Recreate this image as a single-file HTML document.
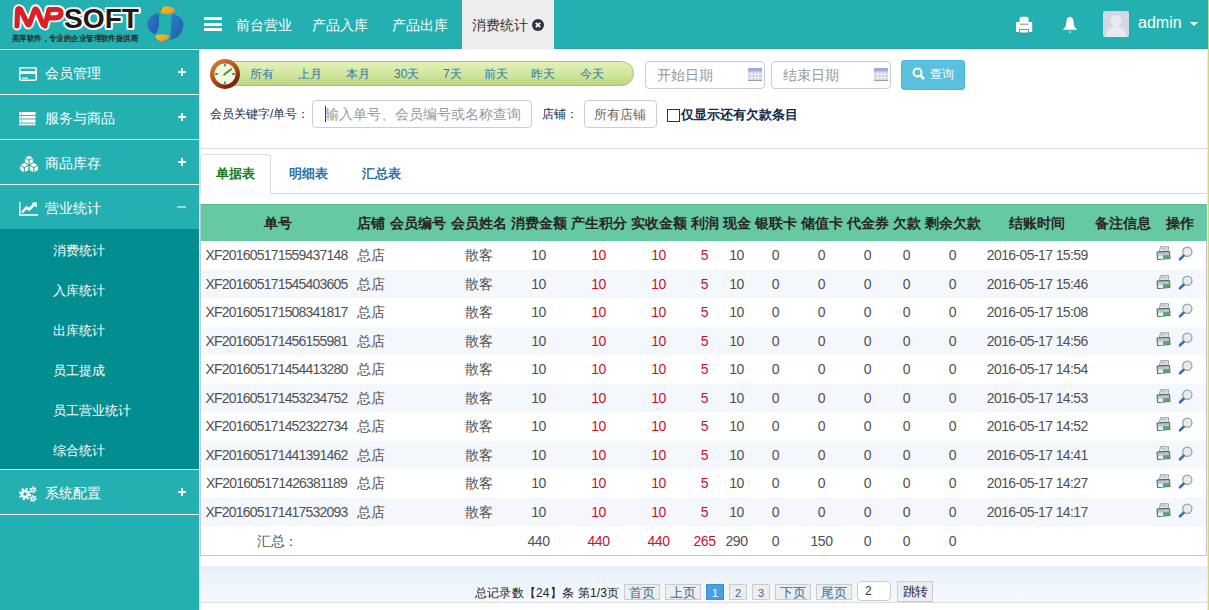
<!DOCTYPE html>
<html><head><meta charset="utf-8">
<style>
*{margin:0;padding:0;box-sizing:border-box}
html,body{width:1209px;height:610px;overflow:hidden;background:#fff;font-family:"Liberation Sans",sans-serif;font-size:13px;color:#333}
.abs{position:absolute}
#hdr{position:absolute;left:0;top:0;width:1209px;height:49px;background:#24b0b0}
#hline{position:absolute;left:0;top:49px;width:1209px;height:1px;background:#e6fcfc}
#hdark{position:absolute;left:0;top:48px;width:1209px;height:1px;background:#2fa3a3}
#rborder{position:absolute;left:1208px;top:0;width:1px;height:610px;background:#dccf7e}
#rcream{position:absolute;left:1207px;top:49px;width:1px;height:561px;background:#f4ead0}
/* sidebar */
#side{position:absolute;left:0;top:50px;width:199px;height:560px;background:#24b0b0}
.mi{position:absolute;left:0;width:199px;height:44px;color:#fff;font-size:14px}
.mi .t{position:absolute;left:45px;top:15px;line-height:16px;white-space:nowrap;font-size:14.4px}
.mi .pl{position:absolute;left:178px;top:18px;width:8px;height:8px}
.mi .pl:before{content:"";position:absolute;left:0;top:3px;width:8px;height:2px;background:#fff}
.mi .pl:after{content:"";position:absolute;left:3px;top:0;width:2px;height:8px;background:#fff}
.sl{position:absolute;left:0;width:199px;height:1px;background:#f2fbfb}
#sub{position:absolute;left:0;top:179px;width:199px;height:240px;background:#028d90}
.si{position:absolute;left:53px;width:140px;height:16px;line-height:16px;color:#fff;font-size:13px;white-space:nowrap}
/* header items */
.nav{position:absolute;top:17px;line-height:16px;font-size:14px;color:#fff;white-space:nowrap}
#acttab{position:absolute;left:462px;top:0;width:92px;height:49px;background:#ededed}
/* filter */
.rng{position:absolute;top:67px;line-height:14px;font-size:12px;color:#2b78b0;white-space:nowrap}
.inp{position:absolute;border:1px solid #ccc;border-radius:4px;background:#fff}
.ph{position:absolute;color:#999;font-size:14px;line-height:16px;white-space:nowrap}
.lbl{position:absolute;font-size:12px;color:#132c4c;line-height:14px;white-space:nowrap}
/* tabs */
.tab{position:absolute;top:166px;font-size:13px;font-weight:bold;line-height:15px;white-space:nowrap}
/* table */
#tbl{position:absolute;left:200px;top:204px;width:1008px;height:352px}
#thead{position:absolute;left:0;top:0;width:1007px;height:37px;background:#66c9a2;border-top:1px solid #5cb995}
#thead .c{position:absolute;top:10px;font-size:14px;font-weight:bold;color:#262626;text-align:center;line-height:16px;white-space:nowrap}
.row{position:absolute;left:0;width:1006px;height:28.5px}
.row.odd{background:#f4f8fc}
.row .c{position:absolute;top:7px;text-align:center;line-height:15px;white-space:nowrap;color:#505050;font-size:14px;letter-spacing:-0.5px}
.red{color:#c8102e}
.ico-pr,.ico-mg{position:absolute;top:5px;width:15px;height:15px}
</style></head><body>
<div id="hdr"></div>
<div id="hline"></div>
<div id="hdark"></div>

<!-- logo -->
<svg class="abs" style="left:0;top:0" width="145" height="48" viewBox="0 0 145 48">
 <g fill="none" stroke-linecap="round" stroke-linejoin="round">
  <path d="M17 26 L17.5 10.5 Q18 7.5 20.5 9.5 L27.5 24 Q28.5 26 29.5 24 L34.5 10 Q35.5 7.5 37 10 L43 24.5" stroke="#fff" stroke-width="9"/><path d="M45 26 L49 9.5 L57 9.5 Q61.5 9.5 61 13.5 Q60.5 17.8 55.5 17.8 L48 17.8" stroke="#fff" stroke-width="9"/>
 </g>
 <text x="64" y="28" textLength="75" lengthAdjust="spacingAndGlyphs" font-family="Liberation Sans" font-weight="bold" font-size="28" stroke="#fff" stroke-width="4" stroke-linejoin="round" paint-order="stroke" fill="#231815">SOFT</text>
 <g fill="none" stroke-linecap="round" stroke-linejoin="round">
  <path d="M17 26 L17.5 10.5 Q18 7.5 20.5 9.5 L27.5 24 Q28.5 26 29.5 24 L34.5 10 Q35.5 7.5 37 10 L43 24.5" stroke="#dc1f25" stroke-width="5.2"/><path d="M45 26 L49 9.5 L57 9.5 Q61.5 9.5 61 13.5 Q60.5 17.8 55.5 17.8 L48 17.8" stroke="#dc1f25" stroke-width="5.2"/>
 </g>
 <text x="12" y="41" textLength="126" lengthAdjust="spacingAndGlyphs" font-family="Liberation Sans" font-weight="bold" font-size="7.5" fill="#1e2a2a">美萍软件，专业的企业管理软件提供商</text>
</svg>
<svg class="abs" style="left:140px;top:0" width="50" height="48" viewBox="0 0 50 48"><defs><linearGradient id="lb" x1="0" y1="0" x2="1" y2="1"><stop offset="0" stop-color="#2f7fcf"/><stop offset="1" stop-color="#1f5aa8"/></linearGradient><linearGradient id="ly" x1="0" y1="0" x2="1" y2="1"><stop offset="0" stop-color="#f7c62a"/><stop offset="1" stop-color="#f08a1c"/></linearGradient></defs>
 <path d="M19.2 12.9 C12 13.5 7 19 7.2 24.2 C7.4 29 10.5 33 15.3 34 C17.5 31 19 28 19 24 C19 20 19.2 16 19.2 12.9Z" fill="url(#lb)"/>
 <path d="M32.2 13.6 C38.5 15 43.5 19.5 43.5 24.9 C43.5 32 38 38.5 30 40 C30.4 38 30.4 36.5 30.4 35.4 C31 30 31.2 27 31.2 24 C31.2 20 31.8 16.5 32.2 13.6Z" fill="url(#lb)"/>
 <path d="M19.2 12.2 C20 9 22.5 6.5 25 6.5 C29 6.3 33.5 7.5 35 10.8 C33.5 13.5 30 14.5 27.3 14.3 C24 14 21.5 13 19.2 12.2Z" fill="url(#ly)"/>
 <path d="M15.3 36 C17 34.5 20 34.3 23 34.5 C26 34.6 28.5 35 30.1 36.1 C28.5 39.5 24 41.5 20.2 41.1 C17.5 40.8 15.8 38.5 15.3 36Z" fill="url(#ly)"/>
 <path d="M19.2 12.2 C19.5 9.5 21.5 7.5 23.5 6.8 C22 9 21 11 20.5 12.6Z" fill="#3f9b3e"/>
 <path d="M30.1 36.1 C31 38 29.5 40 26 41.2 C28.5 39.5 29.5 38 30.1 36.1Z" fill="#2f8f3e"/>
</svg>

<!-- hamburger -->
<div class="abs" style="left:204px;top:17px;width:18px;height:3px;background:#fff"></div>
<div class="abs" style="left:204px;top:23px;width:18px;height:3px;background:#fff"></div>
<div class="abs" style="left:204px;top:28px;width:18px;height:3px;background:#fff"></div>
<div class="nav" style="left:236px">前台营业</div>
<div class="nav" style="left:312px">产品入库</div>
<div class="nav" style="left:392px">产品出库</div>
<div id="acttab"></div>
<div class="nav" style="left:472px;color:#333">消费统计</div>
<svg class="abs" style="left:532px;top:19px" width="12" height="12" viewBox="0 0 12 12"><circle cx="6" cy="6" r="6" fill="#2d3142"/><path d="M3.8 3.8L8.2 8.2M8.2 3.8L3.8 8.2" stroke="#fff" stroke-width="1.8"/></svg>

<!-- right header icons -->
<svg class="abs" style="left:1016px;top:16px" width="17" height="18" viewBox="0 0 17 18"><rect x="3.6" y="0.8" width="9" height="8" rx="2" fill="#fff"/><rect x="0" y="6" width="16.2" height="10" rx="0.5" fill="#fff"/><path d="M3.6 8.2 H12.6" stroke="#3a9aa0" stroke-width="0.9"/><rect x="3.6" y="13.4" width="9" height="3.6" fill="#fff" stroke="#3a9aa0" stroke-width="0.9"/></svg>
<svg class="abs" style="left:1062px;top:16px" width="16" height="18" viewBox="0 0 16 18"><path d="M8 0.8 C5.8 0.8 4.6 3 4.3 6 L3.8 9.8 C3.4 11.4 2 12.4 0.6 13.8 L15.4 13.8 C14 12.4 12.6 11.4 12.2 9.8 L11.7 6 C11.4 3 10.2 0.8 8 0.8Z" fill="#fff"/><path d="M6.8 15.6 H9.2 L8 17.2Z" fill="#fff"/></svg>
<div class="abs" style="left:1103px;top:11px;width:26px;height:26px;background:#d3d7e3;border-radius:2px;overflow:hidden">
 <div class="abs" style="left:8px;top:4px;width:10px;height:12px;border-radius:5px;background:#e8eaf2"></div>
 <div class="abs" style="left:3px;top:16px;width:20px;height:12px;border-radius:8px 8px 0 0;background:#e8eaf2"></div>
</div>
<div class="abs" style="left:1138px;top:14px;font-size:16px;line-height:18px;color:#fff">admin</div>
<div class="abs" style="left:1190px;top:22px;width:0;height:0;border-left:4px solid transparent;border-right:4px solid transparent;border-top:4px solid #fff"></div>

<!-- sidebar -->
<div id="side">
 <div class="mi" style="top:0"><svg class="abs" style="left:19px;top:67px;top:17px" width="18" height="14" viewBox="0 0 18 14"><rect x="0.75" y="0.75" width="16.5" height="12.5" rx="1.5" fill="none" stroke="#fff" stroke-width="1.5"/><rect x="1" y="4" width="16" height="3" fill="#fff"/><rect x="3" y="10.5" width="6" height="1.2" fill="#fff"/></svg><span class="t">会员管理</span><span class="pl"></span></div>
 <div class="sl" style="top:44px"></div>
 <div class="mi" style="top:45px"><svg class="abs" style="left:19px;top:17px" width="17" height="14" viewBox="0 0 17 14"><rect x="0" y="0" width="16.5" height="13.3" fill="#fff"/><rect x="0" y="3" width="17" height="0.9" fill="#24b0b0"/><rect x="0" y="6.5" width="17" height="0.9" fill="#24b0b0"/><rect x="0" y="10.6" width="17" height="0.9" fill="#24b0b0"/><rect x="2.3" y="0" width="0.8" height="14" fill="#7fcfd0"/></svg><span class="t">服务与商品</span><span class="pl"></span></div>
 <div class="sl" style="top:89px"></div>
 <div class="mi" style="top:90px"><svg class="abs" style="left:19px;top:15px" width="20" height="18" viewBox="0 0 20 18"><polygon points="10.00,0.20 14.33,2.70 14.33,7.70 10.00,10.20 5.67,7.70 5.67,2.70" fill="#fff" stroke="#24b0b0" stroke-width="0.9"/><path d="M5.67 2.70 L10.00 5.20 L14.33 2.70 M10.00 5.20 L10.00 10.20" fill="none" stroke="#2a8f8a" stroke-width="1"/><polygon points="5.30,7.40 9.80,10.00 9.80,15.20 5.30,17.80 0.80,15.20 0.80,10.00" fill="#fff" stroke="#24b0b0" stroke-width="0.9"/><path d="M0.80 10.00 L5.30 12.60 L9.80 10.00 M5.30 12.60 L5.30 17.80" fill="none" stroke="#2a8f8a" stroke-width="1"/><polygon points="14.80,7.40 19.30,10.00 19.30,15.20 14.80,17.80 10.30,15.20 10.30,10.00" fill="#fff" stroke="#24b0b0" stroke-width="0.9"/><path d="M10.30 10.00 L14.80 12.60 L19.30 10.00 M14.80 12.60 L14.80 17.80" fill="none" stroke="#2a8f8a" stroke-width="1"/></svg><span class="t">商品库存</span><span class="pl"></span></div>
 <div class="sl" style="top:134px"></div>
 <div class="mi" style="top:135px"><svg class="abs" style="left:18px;top:16px" width="20" height="16" viewBox="0 0 20 16"><path d="M1.75 1 V13.9 H20" fill="none" stroke="#fff" stroke-width="1.5"/><path d="M4 11.5 L8.5 6.5 L11 8.5 L16 3.8" fill="none" stroke="#fff" stroke-width="2.6"/><path d="M13.5 1.8 L19 1.2 L18.5 6.8Z" fill="#fff"/></svg><span class="t">营业统计</span><span class="abs" style="left:177px;top:21px;width:9px;height:2px;background:#9edbd2"></span></div>
 <div id="sub">
  <div class="si" style="top:14px">消费统计</div>
  <div class="si" style="top:54px">入库统计</div>
  <div class="si" style="top:94px">出库统计</div>
  <div class="si" style="top:134px">员工提成</div>
  <div class="si" style="top:174px">员工营业统计</div>
  <div class="si" style="top:214px">综合统计</div>
 </div>
 <div class="sl" style="top:419px"></div>
 <div class="mi" style="top:420px"><svg class="abs" style="left:18px;top:16px" width="20" height="16" viewBox="0 0 20 16"><circle cx="7" cy="8" r="4.3" fill="#fff"/><circle cx="7" cy="8" r="5.2" fill="none" stroke="#fff" stroke-width="2" stroke-dasharray="2.04 2.04"/><circle cx="7" cy="8" r="1.8" fill="#24b0b0"/><circle cx="15" cy="3.8" r="2.3" fill="#fff"/><circle cx="15" cy="3.8" r="2.9" fill="none" stroke="#fff" stroke-width="1.4" stroke-dasharray="1.52 1.52"/><circle cx="15" cy="3.8" r="0.9" fill="#24b0b0"/><circle cx="15" cy="12.6" r="2.3" fill="#fff"/><circle cx="15" cy="12.6" r="2.9" fill="none" stroke="#fff" stroke-width="1.4" stroke-dasharray="1.52 1.52"/><circle cx="15" cy="12.6" r="0.9" fill="#24b0b0"/></svg><span class="t">系统配置</span><span class="pl"></span></div>
 <div class="sl" style="top:464px"></div>
</div>

<!-- filter bar -->
<div class="abs" style="left:226px;top:61px;width:408px;height:25px;border:1px solid #a5c46c;border-radius:0 12.5px 12.5px 0;background:linear-gradient(#e3f1b9,#cfe49a 60%,#bcd67f)"></div>
<svg class="abs" style="left:210px;top:59px" width="30" height="30" viewBox="0 0 30 30"><defs><linearGradient id="cr" x1="0" y1="0" x2="0.6" y2="1"><stop offset="0" stop-color="#d9802e"/><stop offset="0.55" stop-color="#b5501c"/><stop offset="1" stop-color="#7d2410"/></linearGradient></defs><circle cx="15" cy="15" r="12.8" fill="#eef8e2" stroke="url(#cr)" stroke-width="4.4"/><path d="M15 5v2.6M15 22.4v2.6M5.2 15h2.6M22.2 15h2.6" stroke="#37583a" stroke-width="1.3"/><path d="M14 15.8 L21.5 10 L15.5 14.2Z" fill="#4a9a30" stroke="#4a9a30" stroke-width="1.6" stroke-linejoin="round"/></svg>
<div class="rng" style="left:250px">所有</div>
<div class="rng" style="left:298px">上月</div>
<div class="rng" style="left:346px">本月</div>
<div class="rng" style="left:394px">30天</div>
<div class="rng" style="left:443px">7天</div>
<div class="rng" style="left:484px">前天</div>
<div class="rng" style="left:531px">昨天</div>
<div class="rng" style="left:580px">今天</div>

<div class="inp" style="left:645px;top:61px;width:120px;height:28px"></div>
<div class="ph" style="left:657px;top:67px">开始日期</div>
<svg class="abs" style="left:748px;top:68px" width="14" height="13" viewBox="0 0 14 13"><rect x="0" y="0" width="14" height="13" rx="1" fill="#cdd0e6"/><rect x="0" y="0" width="14" height="3.5" fill="#9eaed6"/><path d="M0 6.3h14M0 9.6h14M3.8 3.5v9.5M7.3 3.5v9.5M10.6 3.5v9.5" stroke="#f4f6fb" stroke-width="0.9"/><rect x="0" y="12" width="14" height="1" fill="#98a0c0"/></svg>
<div class="inp" style="left:771px;top:61px;width:120px;height:28px"></div>
<div class="ph" style="left:783px;top:67px">结束日期</div>
<svg class="abs" style="left:874px;top:68px" width="14" height="13" viewBox="0 0 14 13"><rect x="0" y="0" width="14" height="13" rx="1" fill="#cdd0e6"/><rect x="0" y="0" width="14" height="3.5" fill="#9eaed6"/><path d="M0 6.3h14M0 9.6h14M3.8 3.5v9.5M7.3 3.5v9.5M10.6 3.5v9.5" stroke="#f4f6fb" stroke-width="0.9"/><rect x="0" y="12" width="14" height="1" fill="#98a0c0"/></svg>
<div class="abs" style="left:901px;top:60px;width:64px;height:30px;background:#5bc0de;border-radius:3px;border:1px solid #46b8da"></div>
<svg class="abs" style="left:912px;top:67px" width="13" height="13" viewBox="0 0 13 13"><circle cx="5.5" cy="5.5" r="4" fill="none" stroke="#fff" stroke-width="2"/><path d="M8.5 8.5L12 12" stroke="#fff" stroke-width="2.5"/></svg>
<div class="abs" style="left:930px;top:67px;font-size:12px;line-height:14px;color:#fff">查询</div>

<div class="lbl" style="left:210px;top:107px">会员关键字/单号：</div>
<div class="inp" style="left:312px;top:100px;width:220px;height:28px"></div>
<div class="abs" style="left:325px;top:106px;width:1px;height:16px;background:#333"></div>
<div class="ph" style="left:325px;top:106px;width:196px;overflow:hidden">输入单号、会员编号或名称查询</div>
<div class="lbl" style="left:542px;top:107px">店铺：</div>
<div class="inp" style="left:584px;top:100px;width:73px;height:28px"></div>
<div class="abs" style="left:594px;top:107px;font-size:13px;line-height:15px;color:#666">所有店铺</div>
<div class="abs" style="left:667px;top:109px;width:13px;height:13px;border:1px solid #333;background:#fff"></div>
<div class="lbl" style="left:681px;top:107px;font-size:13px;line-height:15px;font-weight:bold;color:#11294a">仅显示还有欠款条目</div>

<!-- tabs -->
<div class="abs" style="left:200px;top:148px;width:1008px;height:1px;background:#ddd"></div>
<div class="abs" style="left:200px;top:193px;width:1008px;height:1px;background:#ddd"></div>
<div class="abs" style="left:200px;top:154px;width:71px;height:40px;background:#fff;border:1px solid #ddd;border-bottom:none;border-radius:4px 4px 0 0"></div>
<div class="tab" style="left:216px;color:#1a7a1a">单据表</div>
<div class="tab" style="left:289px;color:#2a6fa8">明细表</div>
<div class="tab" style="left:362px;color:#2a6fa8">汇总表</div>

<!-- table -->
<div id="tbl">
 <div id="thead"><div class="c " style="left:1.5px;width:152px">单号</div><div class="c " style="left:153.5px;width:34px">店铺</div><div class="c " style="left:187.5px;width:61px">会员编号</div><div class="c " style="left:248.5px;width:60px">会员姓名</div><div class="c " style="left:308.5px;width:60px">消费金额</div><div class="c " style="left:368.5px;width:60px">产生积分</div><div class="c " style="left:428.5px;width:60px">实收金额</div><div class="c " style="left:488.5px;width:32px">利润</div><div class="c " style="left:520.5px;width:32px">现金</div><div class="c " style="left:552.5px;width:46px">银联卡</div><div class="c " style="left:598.5px;width:46px">储值卡</div><div class="c " style="left:644.5px;width:46px">代金券</div><div class="c " style="left:690.5px;width:32px">欠款</div><div class="c " style="left:722.5px;width:60px">剩余欠款</div><div class="c " style="left:782.5px;width:109.5px">结账时间</div><div class="c " style="left:892.0px;width:61.0px">备注信息</div><div class="c " style="left:953.0px;width:53.5px">操作</div></div>
 <div class="row even" style="top:37px;height:29px"><div class="c " style="left:1.5px;width:152px"><span style="letter-spacing:-0.8px;position:relative;left:-1px">XF201605171559437148</span></div><div class="c " style="left:153.5px;width:34px"><span style="font-size:13.5px">总店</span></div><div class="c " style="left:187.5px;width:61px"></div><div class="c " style="left:248.5px;width:60px"><span style="font-size:13.5px">散客</span></div><div class="c " style="left:308.5px;width:60px">10</div><div class="c " style="left:368.5px;width:60px"><span class="red">10</span></div><div class="c " style="left:428.5px;width:60px"><span class="red">10</span></div><div class="c " style="left:488.5px;width:32px"><span class="red">5</span></div><div class="c " style="left:520.5px;width:32px">10</div><div class="c " style="left:552.5px;width:46px">0</div><div class="c " style="left:598.5px;width:46px">0</div><div class="c " style="left:644.5px;width:46px">0</div><div class="c " style="left:690.5px;width:32px">0</div><div class="c " style="left:722.5px;width:60px">0</div><div class="c " style="left:782.5px;width:109.5px"><span style="letter-spacing:-0.6px">2016-05-17 15:59</span></div><div class="c " style="left:892.0px;width:61.0px"></div><div class="c " style="left:953.0px;width:53.5px"></div><svg class="ico-pr" style="left:956px" width="15" height="15" viewBox="0 0 15 15"><path d="M4.5 0.8 L12.5 0.8 L12 5.5 L3.5 5.5Z" fill="#f4f6f8" stroke="#7d8a95" stroke-width="0.9"/><path d="M1 6 L13.5 5.5 L14 12.5 L1.5 13.5Z" fill="#b9c4cc" stroke="#505d68" stroke-width="1"/><path d="M2 9.5 L13.5 9 L13.8 12.3 L2 13Z" fill="#5aa867"/><path d="M2 9.5 L7 9.3 L7 12.9 L2 13Z" fill="#e6edf0"/><path d="M5.5 2.5h5M5.5 4h5" stroke="#9aa6b0" stroke-width="0.7"/></svg><svg class="ico-mg" style="left:978px" width="15" height="15" viewBox="0 0 15 15"><circle cx="9.3" cy="5.8" r="4.6" fill="#e9ecef" stroke="#9aa1a7" stroke-width="1.3"/><path d="M2 13.3 L5.6 9.8" stroke="#3d6fb6" stroke-width="2.6" stroke-linecap="round"/></svg></div><div class="row odd" style="top:66px;height:28px"><div class="c " style="left:1.5px;width:152px"><span style="letter-spacing:-0.8px;position:relative;left:-1px">XF201605171545403605</span></div><div class="c " style="left:153.5px;width:34px"><span style="font-size:13.5px">总店</span></div><div class="c " style="left:187.5px;width:61px"></div><div class="c " style="left:248.5px;width:60px"><span style="font-size:13.5px">散客</span></div><div class="c " style="left:308.5px;width:60px">10</div><div class="c " style="left:368.5px;width:60px"><span class="red">10</span></div><div class="c " style="left:428.5px;width:60px"><span class="red">10</span></div><div class="c " style="left:488.5px;width:32px"><span class="red">5</span></div><div class="c " style="left:520.5px;width:32px">10</div><div class="c " style="left:552.5px;width:46px">0</div><div class="c " style="left:598.5px;width:46px">0</div><div class="c " style="left:644.5px;width:46px">0</div><div class="c " style="left:690.5px;width:32px">0</div><div class="c " style="left:722.5px;width:60px">0</div><div class="c " style="left:782.5px;width:109.5px"><span style="letter-spacing:-0.6px">2016-05-17 15:46</span></div><div class="c " style="left:892.0px;width:61.0px"></div><div class="c " style="left:953.0px;width:53.5px"></div><svg class="ico-pr" style="left:956px" width="15" height="15" viewBox="0 0 15 15"><path d="M4.5 0.8 L12.5 0.8 L12 5.5 L3.5 5.5Z" fill="#f4f6f8" stroke="#7d8a95" stroke-width="0.9"/><path d="M1 6 L13.5 5.5 L14 12.5 L1.5 13.5Z" fill="#b9c4cc" stroke="#505d68" stroke-width="1"/><path d="M2 9.5 L13.5 9 L13.8 12.3 L2 13Z" fill="#5aa867"/><path d="M2 9.5 L7 9.3 L7 12.9 L2 13Z" fill="#e6edf0"/><path d="M5.5 2.5h5M5.5 4h5" stroke="#9aa6b0" stroke-width="0.7"/></svg><svg class="ico-mg" style="left:978px" width="15" height="15" viewBox="0 0 15 15"><circle cx="9.3" cy="5.8" r="4.6" fill="#e9ecef" stroke="#9aa1a7" stroke-width="1.3"/><path d="M2 13.3 L5.6 9.8" stroke="#3d6fb6" stroke-width="2.6" stroke-linecap="round"/></svg></div><div class="row even" style="top:94px;height:29px"><div class="c " style="left:1.5px;width:152px"><span style="letter-spacing:-0.8px;position:relative;left:-1px">XF201605171508341817</span></div><div class="c " style="left:153.5px;width:34px"><span style="font-size:13.5px">总店</span></div><div class="c " style="left:187.5px;width:61px"></div><div class="c " style="left:248.5px;width:60px"><span style="font-size:13.5px">散客</span></div><div class="c " style="left:308.5px;width:60px">10</div><div class="c " style="left:368.5px;width:60px"><span class="red">10</span></div><div class="c " style="left:428.5px;width:60px"><span class="red">10</span></div><div class="c " style="left:488.5px;width:32px"><span class="red">5</span></div><div class="c " style="left:520.5px;width:32px">10</div><div class="c " style="left:552.5px;width:46px">0</div><div class="c " style="left:598.5px;width:46px">0</div><div class="c " style="left:644.5px;width:46px">0</div><div class="c " style="left:690.5px;width:32px">0</div><div class="c " style="left:722.5px;width:60px">0</div><div class="c " style="left:782.5px;width:109.5px"><span style="letter-spacing:-0.6px">2016-05-17 15:08</span></div><div class="c " style="left:892.0px;width:61.0px"></div><div class="c " style="left:953.0px;width:53.5px"></div><svg class="ico-pr" style="left:956px" width="15" height="15" viewBox="0 0 15 15"><path d="M4.5 0.8 L12.5 0.8 L12 5.5 L3.5 5.5Z" fill="#f4f6f8" stroke="#7d8a95" stroke-width="0.9"/><path d="M1 6 L13.5 5.5 L14 12.5 L1.5 13.5Z" fill="#b9c4cc" stroke="#505d68" stroke-width="1"/><path d="M2 9.5 L13.5 9 L13.8 12.3 L2 13Z" fill="#5aa867"/><path d="M2 9.5 L7 9.3 L7 12.9 L2 13Z" fill="#e6edf0"/><path d="M5.5 2.5h5M5.5 4h5" stroke="#9aa6b0" stroke-width="0.7"/></svg><svg class="ico-mg" style="left:978px" width="15" height="15" viewBox="0 0 15 15"><circle cx="9.3" cy="5.8" r="4.6" fill="#e9ecef" stroke="#9aa1a7" stroke-width="1.3"/><path d="M2 13.3 L5.6 9.8" stroke="#3d6fb6" stroke-width="2.6" stroke-linecap="round"/></svg></div><div class="row odd" style="top:123px;height:28px"><div class="c " style="left:1.5px;width:152px"><span style="letter-spacing:-0.8px;position:relative;left:-1px">XF201605171456155981</span></div><div class="c " style="left:153.5px;width:34px"><span style="font-size:13.5px">总店</span></div><div class="c " style="left:187.5px;width:61px"></div><div class="c " style="left:248.5px;width:60px"><span style="font-size:13.5px">散客</span></div><div class="c " style="left:308.5px;width:60px">10</div><div class="c " style="left:368.5px;width:60px"><span class="red">10</span></div><div class="c " style="left:428.5px;width:60px"><span class="red">10</span></div><div class="c " style="left:488.5px;width:32px"><span class="red">5</span></div><div class="c " style="left:520.5px;width:32px">10</div><div class="c " style="left:552.5px;width:46px">0</div><div class="c " style="left:598.5px;width:46px">0</div><div class="c " style="left:644.5px;width:46px">0</div><div class="c " style="left:690.5px;width:32px">0</div><div class="c " style="left:722.5px;width:60px">0</div><div class="c " style="left:782.5px;width:109.5px"><span style="letter-spacing:-0.6px">2016-05-17 14:56</span></div><div class="c " style="left:892.0px;width:61.0px"></div><div class="c " style="left:953.0px;width:53.5px"></div><svg class="ico-pr" style="left:956px" width="15" height="15" viewBox="0 0 15 15"><path d="M4.5 0.8 L12.5 0.8 L12 5.5 L3.5 5.5Z" fill="#f4f6f8" stroke="#7d8a95" stroke-width="0.9"/><path d="M1 6 L13.5 5.5 L14 12.5 L1.5 13.5Z" fill="#b9c4cc" stroke="#505d68" stroke-width="1"/><path d="M2 9.5 L13.5 9 L13.8 12.3 L2 13Z" fill="#5aa867"/><path d="M2 9.5 L7 9.3 L7 12.9 L2 13Z" fill="#e6edf0"/><path d="M5.5 2.5h5M5.5 4h5" stroke="#9aa6b0" stroke-width="0.7"/></svg><svg class="ico-mg" style="left:978px" width="15" height="15" viewBox="0 0 15 15"><circle cx="9.3" cy="5.8" r="4.6" fill="#e9ecef" stroke="#9aa1a7" stroke-width="1.3"/><path d="M2 13.3 L5.6 9.8" stroke="#3d6fb6" stroke-width="2.6" stroke-linecap="round"/></svg></div><div class="row even" style="top:151px;height:29px"><div class="c " style="left:1.5px;width:152px"><span style="letter-spacing:-0.8px;position:relative;left:-1px">XF201605171454413280</span></div><div class="c " style="left:153.5px;width:34px"><span style="font-size:13.5px">总店</span></div><div class="c " style="left:187.5px;width:61px"></div><div class="c " style="left:248.5px;width:60px"><span style="font-size:13.5px">散客</span></div><div class="c " style="left:308.5px;width:60px">10</div><div class="c " style="left:368.5px;width:60px"><span class="red">10</span></div><div class="c " style="left:428.5px;width:60px"><span class="red">10</span></div><div class="c " style="left:488.5px;width:32px"><span class="red">5</span></div><div class="c " style="left:520.5px;width:32px">10</div><div class="c " style="left:552.5px;width:46px">0</div><div class="c " style="left:598.5px;width:46px">0</div><div class="c " style="left:644.5px;width:46px">0</div><div class="c " style="left:690.5px;width:32px">0</div><div class="c " style="left:722.5px;width:60px">0</div><div class="c " style="left:782.5px;width:109.5px"><span style="letter-spacing:-0.6px">2016-05-17 14:54</span></div><div class="c " style="left:892.0px;width:61.0px"></div><div class="c " style="left:953.0px;width:53.5px"></div><svg class="ico-pr" style="left:956px" width="15" height="15" viewBox="0 0 15 15"><path d="M4.5 0.8 L12.5 0.8 L12 5.5 L3.5 5.5Z" fill="#f4f6f8" stroke="#7d8a95" stroke-width="0.9"/><path d="M1 6 L13.5 5.5 L14 12.5 L1.5 13.5Z" fill="#b9c4cc" stroke="#505d68" stroke-width="1"/><path d="M2 9.5 L13.5 9 L13.8 12.3 L2 13Z" fill="#5aa867"/><path d="M2 9.5 L7 9.3 L7 12.9 L2 13Z" fill="#e6edf0"/><path d="M5.5 2.5h5M5.5 4h5" stroke="#9aa6b0" stroke-width="0.7"/></svg><svg class="ico-mg" style="left:978px" width="15" height="15" viewBox="0 0 15 15"><circle cx="9.3" cy="5.8" r="4.6" fill="#e9ecef" stroke="#9aa1a7" stroke-width="1.3"/><path d="M2 13.3 L5.6 9.8" stroke="#3d6fb6" stroke-width="2.6" stroke-linecap="round"/></svg></div><div class="row odd" style="top:180px;height:28px"><div class="c " style="left:1.5px;width:152px"><span style="letter-spacing:-0.8px;position:relative;left:-1px">XF201605171453234752</span></div><div class="c " style="left:153.5px;width:34px"><span style="font-size:13.5px">总店</span></div><div class="c " style="left:187.5px;width:61px"></div><div class="c " style="left:248.5px;width:60px"><span style="font-size:13.5px">散客</span></div><div class="c " style="left:308.5px;width:60px">10</div><div class="c " style="left:368.5px;width:60px"><span class="red">10</span></div><div class="c " style="left:428.5px;width:60px"><span class="red">10</span></div><div class="c " style="left:488.5px;width:32px"><span class="red">5</span></div><div class="c " style="left:520.5px;width:32px">10</div><div class="c " style="left:552.5px;width:46px">0</div><div class="c " style="left:598.5px;width:46px">0</div><div class="c " style="left:644.5px;width:46px">0</div><div class="c " style="left:690.5px;width:32px">0</div><div class="c " style="left:722.5px;width:60px">0</div><div class="c " style="left:782.5px;width:109.5px"><span style="letter-spacing:-0.6px">2016-05-17 14:53</span></div><div class="c " style="left:892.0px;width:61.0px"></div><div class="c " style="left:953.0px;width:53.5px"></div><svg class="ico-pr" style="left:956px" width="15" height="15" viewBox="0 0 15 15"><path d="M4.5 0.8 L12.5 0.8 L12 5.5 L3.5 5.5Z" fill="#f4f6f8" stroke="#7d8a95" stroke-width="0.9"/><path d="M1 6 L13.5 5.5 L14 12.5 L1.5 13.5Z" fill="#b9c4cc" stroke="#505d68" stroke-width="1"/><path d="M2 9.5 L13.5 9 L13.8 12.3 L2 13Z" fill="#5aa867"/><path d="M2 9.5 L7 9.3 L7 12.9 L2 13Z" fill="#e6edf0"/><path d="M5.5 2.5h5M5.5 4h5" stroke="#9aa6b0" stroke-width="0.7"/></svg><svg class="ico-mg" style="left:978px" width="15" height="15" viewBox="0 0 15 15"><circle cx="9.3" cy="5.8" r="4.6" fill="#e9ecef" stroke="#9aa1a7" stroke-width="1.3"/><path d="M2 13.3 L5.6 9.8" stroke="#3d6fb6" stroke-width="2.6" stroke-linecap="round"/></svg></div><div class="row even" style="top:208px;height:29px"><div class="c " style="left:1.5px;width:152px"><span style="letter-spacing:-0.8px;position:relative;left:-1px">XF201605171452322734</span></div><div class="c " style="left:153.5px;width:34px"><span style="font-size:13.5px">总店</span></div><div class="c " style="left:187.5px;width:61px"></div><div class="c " style="left:248.5px;width:60px"><span style="font-size:13.5px">散客</span></div><div class="c " style="left:308.5px;width:60px">10</div><div class="c " style="left:368.5px;width:60px"><span class="red">10</span></div><div class="c " style="left:428.5px;width:60px"><span class="red">10</span></div><div class="c " style="left:488.5px;width:32px"><span class="red">5</span></div><div class="c " style="left:520.5px;width:32px">10</div><div class="c " style="left:552.5px;width:46px">0</div><div class="c " style="left:598.5px;width:46px">0</div><div class="c " style="left:644.5px;width:46px">0</div><div class="c " style="left:690.5px;width:32px">0</div><div class="c " style="left:722.5px;width:60px">0</div><div class="c " style="left:782.5px;width:109.5px"><span style="letter-spacing:-0.6px">2016-05-17 14:52</span></div><div class="c " style="left:892.0px;width:61.0px"></div><div class="c " style="left:953.0px;width:53.5px"></div><svg class="ico-pr" style="left:956px" width="15" height="15" viewBox="0 0 15 15"><path d="M4.5 0.8 L12.5 0.8 L12 5.5 L3.5 5.5Z" fill="#f4f6f8" stroke="#7d8a95" stroke-width="0.9"/><path d="M1 6 L13.5 5.5 L14 12.5 L1.5 13.5Z" fill="#b9c4cc" stroke="#505d68" stroke-width="1"/><path d="M2 9.5 L13.5 9 L13.8 12.3 L2 13Z" fill="#5aa867"/><path d="M2 9.5 L7 9.3 L7 12.9 L2 13Z" fill="#e6edf0"/><path d="M5.5 2.5h5M5.5 4h5" stroke="#9aa6b0" stroke-width="0.7"/></svg><svg class="ico-mg" style="left:978px" width="15" height="15" viewBox="0 0 15 15"><circle cx="9.3" cy="5.8" r="4.6" fill="#e9ecef" stroke="#9aa1a7" stroke-width="1.3"/><path d="M2 13.3 L5.6 9.8" stroke="#3d6fb6" stroke-width="2.6" stroke-linecap="round"/></svg></div><div class="row odd" style="top:237px;height:28px"><div class="c " style="left:1.5px;width:152px"><span style="letter-spacing:-0.8px;position:relative;left:-1px">XF201605171441391462</span></div><div class="c " style="left:153.5px;width:34px"><span style="font-size:13.5px">总店</span></div><div class="c " style="left:187.5px;width:61px"></div><div class="c " style="left:248.5px;width:60px"><span style="font-size:13.5px">散客</span></div><div class="c " style="left:308.5px;width:60px">10</div><div class="c " style="left:368.5px;width:60px"><span class="red">10</span></div><div class="c " style="left:428.5px;width:60px"><span class="red">10</span></div><div class="c " style="left:488.5px;width:32px"><span class="red">5</span></div><div class="c " style="left:520.5px;width:32px">10</div><div class="c " style="left:552.5px;width:46px">0</div><div class="c " style="left:598.5px;width:46px">0</div><div class="c " style="left:644.5px;width:46px">0</div><div class="c " style="left:690.5px;width:32px">0</div><div class="c " style="left:722.5px;width:60px">0</div><div class="c " style="left:782.5px;width:109.5px"><span style="letter-spacing:-0.6px">2016-05-17 14:41</span></div><div class="c " style="left:892.0px;width:61.0px"></div><div class="c " style="left:953.0px;width:53.5px"></div><svg class="ico-pr" style="left:956px" width="15" height="15" viewBox="0 0 15 15"><path d="M4.5 0.8 L12.5 0.8 L12 5.5 L3.5 5.5Z" fill="#f4f6f8" stroke="#7d8a95" stroke-width="0.9"/><path d="M1 6 L13.5 5.5 L14 12.5 L1.5 13.5Z" fill="#b9c4cc" stroke="#505d68" stroke-width="1"/><path d="M2 9.5 L13.5 9 L13.8 12.3 L2 13Z" fill="#5aa867"/><path d="M2 9.5 L7 9.3 L7 12.9 L2 13Z" fill="#e6edf0"/><path d="M5.5 2.5h5M5.5 4h5" stroke="#9aa6b0" stroke-width="0.7"/></svg><svg class="ico-mg" style="left:978px" width="15" height="15" viewBox="0 0 15 15"><circle cx="9.3" cy="5.8" r="4.6" fill="#e9ecef" stroke="#9aa1a7" stroke-width="1.3"/><path d="M2 13.3 L5.6 9.8" stroke="#3d6fb6" stroke-width="2.6" stroke-linecap="round"/></svg></div><div class="row even" style="top:265px;height:29px"><div class="c " style="left:1.5px;width:152px"><span style="letter-spacing:-0.8px;position:relative;left:-1px">XF201605171426381189</span></div><div class="c " style="left:153.5px;width:34px"><span style="font-size:13.5px">总店</span></div><div class="c " style="left:187.5px;width:61px"></div><div class="c " style="left:248.5px;width:60px"><span style="font-size:13.5px">散客</span></div><div class="c " style="left:308.5px;width:60px">10</div><div class="c " style="left:368.5px;width:60px"><span class="red">10</span></div><div class="c " style="left:428.5px;width:60px"><span class="red">10</span></div><div class="c " style="left:488.5px;width:32px"><span class="red">5</span></div><div class="c " style="left:520.5px;width:32px">10</div><div class="c " style="left:552.5px;width:46px">0</div><div class="c " style="left:598.5px;width:46px">0</div><div class="c " style="left:644.5px;width:46px">0</div><div class="c " style="left:690.5px;width:32px">0</div><div class="c " style="left:722.5px;width:60px">0</div><div class="c " style="left:782.5px;width:109.5px"><span style="letter-spacing:-0.6px">2016-05-17 14:27</span></div><div class="c " style="left:892.0px;width:61.0px"></div><div class="c " style="left:953.0px;width:53.5px"></div><svg class="ico-pr" style="left:956px" width="15" height="15" viewBox="0 0 15 15"><path d="M4.5 0.8 L12.5 0.8 L12 5.5 L3.5 5.5Z" fill="#f4f6f8" stroke="#7d8a95" stroke-width="0.9"/><path d="M1 6 L13.5 5.5 L14 12.5 L1.5 13.5Z" fill="#b9c4cc" stroke="#505d68" stroke-width="1"/><path d="M2 9.5 L13.5 9 L13.8 12.3 L2 13Z" fill="#5aa867"/><path d="M2 9.5 L7 9.3 L7 12.9 L2 13Z" fill="#e6edf0"/><path d="M5.5 2.5h5M5.5 4h5" stroke="#9aa6b0" stroke-width="0.7"/></svg><svg class="ico-mg" style="left:978px" width="15" height="15" viewBox="0 0 15 15"><circle cx="9.3" cy="5.8" r="4.6" fill="#e9ecef" stroke="#9aa1a7" stroke-width="1.3"/><path d="M2 13.3 L5.6 9.8" stroke="#3d6fb6" stroke-width="2.6" stroke-linecap="round"/></svg></div><div class="row odd" style="top:294px;height:28px"><div class="c " style="left:1.5px;width:152px"><span style="letter-spacing:-0.8px;position:relative;left:-1px">XF201605171417532093</span></div><div class="c " style="left:153.5px;width:34px"><span style="font-size:13.5px">总店</span></div><div class="c " style="left:187.5px;width:61px"></div><div class="c " style="left:248.5px;width:60px"><span style="font-size:13.5px">散客</span></div><div class="c " style="left:308.5px;width:60px">10</div><div class="c " style="left:368.5px;width:60px"><span class="red">10</span></div><div class="c " style="left:428.5px;width:60px"><span class="red">10</span></div><div class="c " style="left:488.5px;width:32px"><span class="red">5</span></div><div class="c " style="left:520.5px;width:32px">10</div><div class="c " style="left:552.5px;width:46px">0</div><div class="c " style="left:598.5px;width:46px">0</div><div class="c " style="left:644.5px;width:46px">0</div><div class="c " style="left:690.5px;width:32px">0</div><div class="c " style="left:722.5px;width:60px">0</div><div class="c " style="left:782.5px;width:109.5px"><span style="letter-spacing:-0.6px">2016-05-17 14:17</span></div><div class="c " style="left:892.0px;width:61.0px"></div><div class="c " style="left:953.0px;width:53.5px"></div><svg class="ico-pr" style="left:956px" width="15" height="15" viewBox="0 0 15 15"><path d="M4.5 0.8 L12.5 0.8 L12 5.5 L3.5 5.5Z" fill="#f4f6f8" stroke="#7d8a95" stroke-width="0.9"/><path d="M1 6 L13.5 5.5 L14 12.5 L1.5 13.5Z" fill="#b9c4cc" stroke="#505d68" stroke-width="1"/><path d="M2 9.5 L13.5 9 L13.8 12.3 L2 13Z" fill="#5aa867"/><path d="M2 9.5 L7 9.3 L7 12.9 L2 13Z" fill="#e6edf0"/><path d="M5.5 2.5h5M5.5 4h5" stroke="#9aa6b0" stroke-width="0.7"/></svg><svg class="ico-mg" style="left:978px" width="15" height="15" viewBox="0 0 15 15"><circle cx="9.3" cy="5.8" r="4.6" fill="#e9ecef" stroke="#9aa1a7" stroke-width="1.3"/><path d="M2 13.3 L5.6 9.8" stroke="#3d6fb6" stroke-width="2.6" stroke-linecap="round"/></svg></div><div class="row sum" style="top:323px"><div class="c " style="left:1.5px;width:152px"><span style="position:relative;left:0px">汇总：</span></div><div class="c " style="left:153.5px;width:34px"></div><div class="c " style="left:187.5px;width:61px"></div><div class="c " style="left:248.5px;width:60px"></div><div class="c " style="left:308.5px;width:60px">440</div><div class="c " style="left:368.5px;width:60px"><span class="red">440</span></div><div class="c " style="left:428.5px;width:60px"><span class="red">440</span></div><div class="c " style="left:488.5px;width:32px"><span class="red">265</span></div><div class="c " style="left:520.5px;width:32px">290</div><div class="c " style="left:552.5px;width:46px">0</div><div class="c " style="left:598.5px;width:46px">150</div><div class="c " style="left:644.5px;width:46px">0</div><div class="c " style="left:690.5px;width:32px">0</div><div class="c " style="left:722.5px;width:60px">0</div><div class="c " style="left:782.5px;width:109.5px"></div><div class="c " style="left:892.0px;width:61.0px"></div><div class="c " style="left:953.0px;width:53.5px"></div></div>
 <div class="abs" style="left:0;top:0;width:1px;height:352px;background:#c4c8d2"></div>
 <div class="abs" style="left:1006px;top:37px;width:1px;height:315px;background:#c9c6d2"></div>
 <div class="abs" style="left:0;top:351px;width:1007px;height:1px;background:#c8c8c8"></div>
</div>

<!-- pagination -->
<div class="abs" style="left:200px;top:566px;width:1008px;height:36px;background:linear-gradient(#e8f1fa,#f5f9fd)"></div>
<div class="abs" style="left:200px;top:602px;width:1008px;height:1px;background:#ddd"></div>
<div class="abs" style="left:475px;top:586px;font-size:12px;line-height:14px;color:#222;white-space:nowrap;letter-spacing:0.2px">总记录数【24】条 第1/3页</div>
<div class="pg abs" style="left:624px;top:584px;width:36px;height:16px;background:#eee;border:1px solid #ccc;color:#2f6aa5;font-size:13px;line-height:15px;text-align:center">首页</div>
<div class="pg abs" style="left:665px;top:584px;width:36px;height:16px;background:#eee;border:1px solid #ccc;color:#2f6aa5;font-size:13px;line-height:15px;text-align:center">上页</div>
<div class="pg abs" style="left:706px;top:584px;width:18px;height:16px;background:#4a9fe0;border:1px solid #3d8fd0;color:#fff;font-size:11px;line-height:16px;text-align:center">1</div>
<div class="pg abs" style="left:729px;top:584px;width:18px;height:16px;background:#eee;border:1px solid #ccc;color:#2f6aa5;font-size:11px;line-height:16px;text-align:center">2</div>
<div class="pg abs" style="left:752px;top:584px;width:18px;height:16px;background:#eee;border:1px solid #ccc;color:#2f6aa5;font-size:11px;line-height:16px;text-align:center">3</div>
<div class="pg abs" style="left:775px;top:584px;width:36px;height:16px;background:#eee;border:1px solid #ccc;color:#2f6aa5;font-size:13px;line-height:15px;text-align:center">下页</div>
<div class="pg abs" style="left:816px;top:584px;width:36px;height:16px;background:#eee;border:1px solid #ccc;color:#2f6aa5;font-size:13px;line-height:15px;text-align:center">尾页</div>
<div class="abs" style="left:857px;top:581px;width:34px;height:20px;background:#fff;border:1px solid #ccc;border-radius:4px;font-size:12px;line-height:19px;padding-left:7px;color:#333">2</div>
<div class="abs" style="left:897px;top:581px;width:36px;height:21px;background:#eee;border:1px solid #ccc;font-size:13px;line-height:19px;text-align:center;color:#1b2b4a;letter-spacing:-0.5px">跳转</div>

<div class="abs" style="left:199px;top:50px;width:1px;height:560px;background:#cdf3f3"></div>
<div id="rcream"></div>
<div id="rborder"></div>
</body></html>
